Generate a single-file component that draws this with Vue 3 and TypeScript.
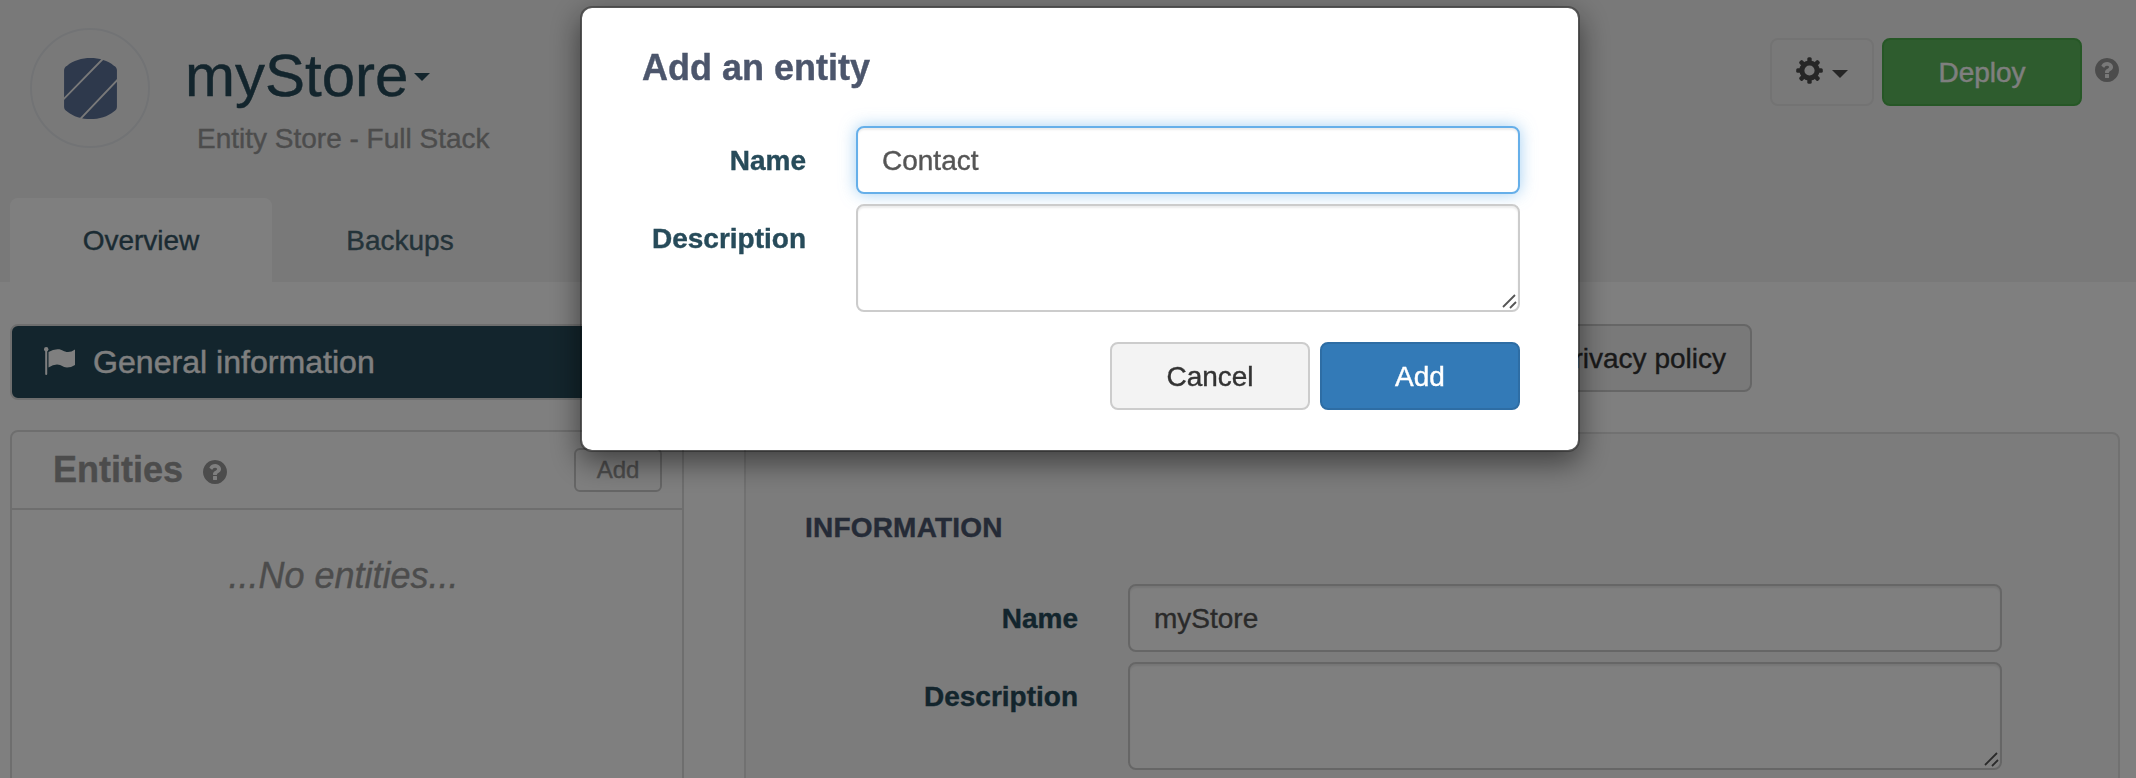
<script setup lang="ts">
import { ref } from 'vue'

const tabs = ['Overview', 'Backups']
const activeTab = ref('Overview')
const storeName = ref('myStore')
const storeDescription = ref('')
const entityName = ref('Contact')
const entityDescription = ref('')

const helpPath =
  'M1024 1376v-192q0-14-9-23t-23-9h-192q-14 0-23 9t-9 23v192q0 14 9 23t23 9h192q14 0 23-9t9-23zm256-672q0-88-55.5-163t-138.5-116-170-41q-243 0-371 213-15 24 8 42l132 100q7 6 19 6 16 0 25-12 53-68 86-92 34-24 86-24 48 0 85.5 26t37.5 59q0 38-20 61t-68 45q-63 28-115.5 86.5t-52.5 125.5v36q0 14 9 23t23 9h192q14 0 23-9t9-23q0-19 21.5-49.5t54.5-49.5q32-18 49-28.5t46-35 44.5-48 28-60.5 12.5-81zm384 192q0 209-103 385.5t-279.5 279.5-385.5 103-385.5-103-279.5-279.5-103-385.5 103-385.5 279.5-279.5 385.5-103 385.5 103 279.5 279.5 103 385.5z'
</script>

<template>
  <div class="page">
    <header class="header">
      <div class="brand">
        <div class="logo">
          <svg width="53" height="61" viewBox="0 0 52 60">
            <path d="M0 12Q0 9 3 7.500C15 -2.500 37 -2.500 49 7.500Q52 9 52 12V48Q52 51 49 52.500C37 62.500 15 62.500 3 52.500Q0 51 0 48Z" fill="#5d7298" />
            <path d="M-1 41L39 0M15 61L53 21" stroke="#f3f3f3" stroke-width="1.8" />
          </svg>
        </div>
        <div class="titles">
          <h1 class="store-name">myStore<span class="caret"></span></h1>
          <p class="subtitle">Entity Store - Full Stack</p>
        </div>
        <div class="actions">
          <button class="btn gear">
            <svg class="cog" width="27" height="27" viewBox="-13.5 -13.5 27 27">
              <g fill="#4d4d4d">
                <rect v-for="n in 4" :key="n" x="-2.2" y="-13.3" width="4.400" height="26.6" rx="1.5" :transform="`rotate(${n * 45})`" />
              </g>
              <circle r="7.6" fill="#f3f3f3" stroke="#4d4d4d" stroke-width="5" />
            </svg>
            <span class="caret"></span>
          </button>
          <button class="btn deploy">Deploy</button>
          <svg class="help" width="24" height="24" viewBox="128 128 1536 1536"><path :d="helpPath" fill="#999" /></svg>
        </div>
      </div>
      <nav class="tabs">
        <a v-for="tab in tabs" :key="tab" class="tab" :class="{ active: tab === activeTab }" @click="activeTab = tab">{{ tab }}</a>
      </nav>
    </header>

    <main class="content">
      <aside class="side">
        <div class="general">
          <svg width="31" height="28" viewBox="0 0 31 28" fill="#fff">
            <circle cx="2.2" cy="2.2" r="2.2" />
            <rect x="1.2" y="2" width="2" height="26" rx="1" />
            <path d="M4.500 5Q9 2.200 13.500 2.200C19 2.200 19.500 5 24 5Q27.500 5 31 2.500V18Q27 20.500 23 20.500C18.500 20.500 18 17.500 13 17.500Q9 17.500 4.500 20.500Z" />
          </svg>
          <span>General information</span>
        </div>
        <section class="entities">
          <div class="entities-head">
            <h2>Entities</h2>
            <svg class="help" width="24" height="24" viewBox="128 128 1536 1536"><path :d="helpPath" fill="#999" /></svg>
            <button class="small-btn">Add</button>
          </div>
          <p class="empty">...No entities...</p>
        </section>
      </aside>

      <div class="detail">
        <div class="toolbar"><button class="btn">Privacy policy</button></div>
        <section class="info">
          <h3>INFORMATION</h3>
          <div class="row">
            <label>Name</label>
            <input v-model="storeName" class="field" />
          </div>
          <div class="row">
            <label>Description</label>
            <div class="area-wrap">
              <textarea v-model="storeDescription" class="field area"></textarea>
              <svg class="grip" width="15" height="15"><path d="M1 13L13 1M8 14L14 8" /></svg>
            </div>
          </div>
        </section>
      </div>
    </main>

    <div class="backdrop">
      <div class="modal" role="dialog">
        <h2>Add an entity</h2>
        <div class="row">
          <label>Name</label>
          <input v-model="entityName" class="field focused" />
        </div>
        <div class="row">
          <label>Description</label>
          <div class="area-wrap">
            <textarea v-model="entityDescription" class="field area"></textarea>
            <svg class="grip" width="15" height="15"><path d="M1 13L13 1M8 14L14 8" /></svg>
          </div>
        </div>
        <div class="modal-actions">
          <button class="btn">Cancel</button>
          <button class="btn primary">Add</button>
        </div>
      </div>
    </div>
  </div>
</template>

<style>
body { margin: 0; overflow: hidden; }
</style>

<style scoped>
* { box-sizing: border-box; }
h1, h2, h3, p { margin: 0; }
button, input, textarea { font-family: inherit; font-size: inherit; }
svg { display: block; flex: none; }

.page {
  height: 778px;
  overflow: hidden;
  background: #fff;
  font: 28px/40px "Liberation Sans", Arial, sans-serif;
  color: #333;
  -webkit-text-stroke: .4px;
}

.header {
  height: 282px;
  background: #f3f3f3;
  display: flex;
  flex-direction: column;
  justify-content: space-between;
}
.brand { display: flex; padding: 28px 17px 0 30px; }
.logo {
  width: 120px;
  height: 120px;
  border: 2px solid #e4e7ea;
  border-radius: 50%;
  display: flex;
  align-items: center;
  justify-content: center;
}
.titles { margin-left: 35px; }
.store-name {
  display: flex;
  align-items: center;
  font-size: 60px;
  line-height: 66px;
  font-weight: 400;
  color: #274b5a;
  margin-top: 15px;
}
.caret {
  border: 8px solid transparent;
  border-top-color: currentColor;
  border-bottom: 0;
}
.store-name .caret { margin: 2px 0 0 6px; }
.subtitle { margin: 10px 0 0 12px; color: #999; }
.actions { margin: 10px 0 0 auto; display: flex; align-items: flex-start; }

.btn {
  height: 68px;
  min-width: 200px;
  padding: 1px 24px 0;
  border: 2px solid #ccc;
  border-radius: 8px;
  background: #f3f3f3;
  color: #333;
}
.gear {
  min-width: 0;
  width: 104px;
  padding: 0;
  display: flex;
  align-items: center;
  justify-content: center;
  gap: 9px;
  border-color: #e6e6e6;
  color: #4d4d4d;
}
.cog { margin-top: -4px; }
.gear .caret { margin-top: 3px; }
.deploy { margin-left: 8px; background: #5cb85c; border-color: #4cae4c; color: #fff; }
.actions .help { margin: 20px 0 0 13px; }

.tabs { display: flex; padding-left: 10px; }
.tab {
  width: 262px;
  height: 84px;
  line-height: 85px;
  text-align: center;
  color: #486673;
  border-radius: 8px 8px 0 0;
}
.tab + .tab { width: 256px; }
.tab.active { background: #fff; color: #365766; }

.content { display: flex; padding: 42px 16px 0 10px; }
.side { width: 674px; }
.general {
  height: 76px;
  border: 2px solid #ddd;
  border-radius: 8px;
  background: #274b5a;
  color: #fff;
  display: flex;
  align-items: center;
  gap: 18px;
  padding-left: 32px;
  font-size: 32.1px;
}
.general svg { margin-top: -2px; }
.entities {
  margin-top: 30px;
  height: 400px;
  border: 2px solid #ddd;
  border-radius: 8px;
}
.entities-head {
  height: 78px;
  border-bottom: 2px solid #ddd;
  display: flex;
  align-items: center;
  padding: 0 20px 0 41px;
  color: #999;
}
.entities-head h2 { font-size: 36px; }
.entities-head .help { margin: 3px 0 0 20px; }
.small-btn {
  margin-left: auto;
  width: 88px;
  height: 44px;
  padding: 0;
  border: 2px solid #ccc;
  border-radius: 6px;
  background: #fff;
  color: #999;
  font-size: 24px;
}
.empty { margin: 46px 7px 0 0; text-align: center; font-size: 36px; font-style: italic; color: #999; }

.detail { flex: 1; margin-left: 60px; }
.toolbar { width: 1008px; display: flex; justify-content: flex-end; }
.info {
  margin-top: 40px;
  height: 400px;
  border: 2px solid #e2e2e2;
  border-radius: 8px;
  background: #f8f8f8;
  padding: 74px 116px 0 58px;
}
.info h3 { font-size: 28px; letter-spacing: .2px; color: #4a566e; margin: 0 0 36px 1px; }

.row { display: flex; margin-bottom: 10px; }
.row label { line-height: 69px; height: 68px; font-weight: 700; text-align: right; color: #274b5a; }
.info label { width: 274px; margin-right: 50px; }
.field {
  display: block;
  flex: 1;
  min-width: 0;
  height: 68px;
  padding: 1px 24px 0;
  border: 2px solid #ccc;
  border-radius: 8px;
  background: #fff;
  color: #555;
  outline: none;
  box-shadow: inset 0 2px 2px rgba(0, 0, 0, .075);
}
.area-wrap { flex: 1; position: relative; }
.area { width: 100%; height: 108px; resize: none; }
.grip { position: absolute; right: 3px; bottom: 3px; fill: none; stroke: #555; stroke-width: 1.8; }
.focused {
  border-color: #66afe9;
  box-shadow: inset 0 2px 2px rgba(0, 0, 0, .075), 0 0 16px rgba(102, 175, 233, .6);
}

.backdrop {
  position: fixed;
  inset: 0;
  background: rgba(0, 0, 0, .5);
  display: flex;
  justify-content: center;
  align-items: flex-start;
  padding: 6px 0 0 24px;
}
.modal {
  width: 1000px;
  height: 446px;
  border: 2px solid rgba(0, 0, 0, .3);
  border-radius: 12px;
  background: #fff;
  background-clip: padding-box;
  box-shadow: 0 10px 30px rgba(0, 0, 0, .5);
  padding: 40px 58px 0;
}
.modal h2 { font-size: 36px; color: #4c566c; margin: 0 0 38px 2px; }
.modal label { width: 166px; margin-right: 50px; }
.modal-actions { display: flex; justify-content: flex-end; gap: 10px; margin-top: 30px; }
.primary { background: #337ab7; border-color: #2e6da4; color: #fff; }
</style>
